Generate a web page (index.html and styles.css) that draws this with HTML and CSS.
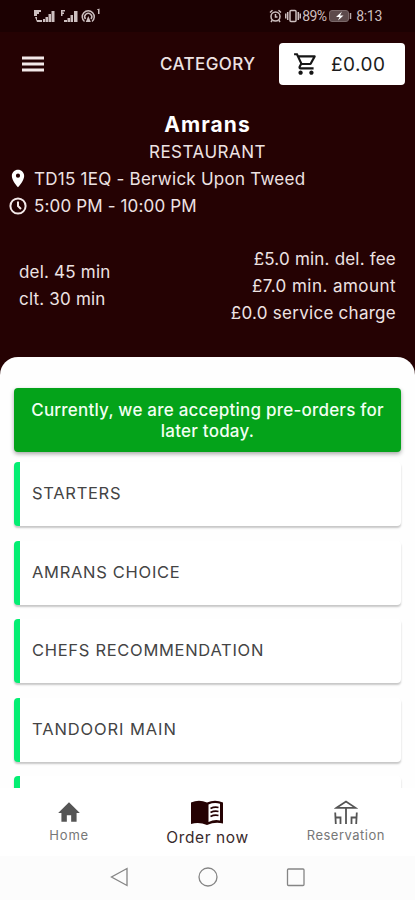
FILE: index.html
```html
<!DOCTYPE html>
<html lang="en">
<head>
    <meta charset="UTF-8">
    <meta name="viewport" content="width=device-width, initial-scale=1.0">
    <title>Amrans</title>
    <link rel="stylesheet" href="styles.css">
</head>
<body>
    <div class="app">
        <div class="status-bar">
            <div class="status-left">
                <svg width="70" height="16" viewBox="0 0 70 16" fill="#cdbfbf">
                    <path d="M0 2h7v2H5v2H3v2H0zM1 9h2v3h5v2H3zM9 11h2v3H9zM11.500 9h2.500v5h-2.500zM14.500 6H17v8h-2.500zM17.500 3h3v11h-3z"/>
                    <path d="M27 2h4v1.500h-2.500v1H30V6h-1.500v2H27zM30 12h3v2h-3zM33.500 10H36v4h-2.500zM36.500 7H39v7h-2.500zM40 3h3.500v11H40z"/>
                    <path d="M50.500 13.500a6 6 0 1 1 7.500 0M51.500 11a3.500 3.500 0 1 1 5.500 0" fill="none" stroke="#cdbfbf" stroke-width="1.500"/>
                    <path d="M54.300 8l2.500 6h-5z"/>
                    <path d="M63 1.500l2.500-1V6H64V2h-1z"/>
                </svg>
            </div>
            <div class="status-right">
                <svg width="13" height="14" viewBox="0 0 13 14" fill="none" stroke="#cdbfbf" stroke-width="1.500">
                    <circle cx="6.500" cy="7.500" r="4.500"/>
                    <path d="M1 3.500L3.500 1.300M12 3.500L9.500 1.300M6.500 5v3h2M3.200 11.300L2 13M9.800 11.300L11 13"/>
                </svg>
                <svg class="vibrate" width="16" height="14" viewBox="0 0 16 14" fill="none" stroke="#cdbfbf" stroke-width="1.500">
                    <rect x="5" y="1.500" width="6" height="11" rx="1"/>
                    <path d="M2.700 3v8M13.300 3v8M.7 4.500v5M15.300 4.500v5"/>
                </svg>
                <span class="percent">89%</span>
                <svg class="battery" width="23" height="12" viewBox="0 0 23 12">
                    <rect x=".5" y=".5" width="19" height="11" rx="2.500" fill="#5d4a4b" stroke="#7a6869"/>
                    <path d="M13 1.500L7 7h3.500L9 10.500 14.500 5.500H11z" fill="#fff"/>
                    <path d="M21.500 3v6" stroke="#b5a7a7" stroke-width="1.500"/>
                </svg>
                <span class="time">8:13</span>
            </div>
        </div>

        <div class="toolbar">
            <svg class="menu-icon" width="22" height="16" viewBox="0 0 22 16" fill="#f3e9e9">
                <path d="M0 .5h22v3H0zM0 6.500h22v3H0zM0 12.500h22v3H0z"/>
            </svg>
            <span class="category">CATEGORY</span>
            <button class="cart">
                <svg width="26" height="26" viewBox="0 0 24 24" fill="#161616">
                    <path d="M15.550 13c.75 0 1.410-.41 1.750-1.030l3.580-6.490c.37-.66-.11-1.480-.87-1.480H5.210l-.94-2H1v2h2l3.600 7.590-1.350 2.440C4.520 15.370 5.480 17 7 17h12v-2H7l1.100-2h7.450zM6.160 6h12.150l-2.760 5H8.530L6.160 6zM7 18c-1.100 0-1.990.9-1.990 2S5.900 22 7 22s2-.9 2-2-.9-2-2-2zm10 0c-1.100 0-1.990.9-1.990 2s.89 2 1.990 2 2-.9 2-2-.9-2-2-2z"/>
                </svg>
                <span>£0.00</span>
            </button>
        </div>

        <div class="restaurant">
            <h1>Amrans</h1>
            <div class="type">RESTAURANT</div>
            <div class="line">
                <svg width="20" height="20" viewBox="0 0 24 24" fill="#fff">
                    <path d="M12 1C8 1 4.600 4.200 4.600 8.300 4.600 14 12 22 12 22s7.400-8 7.400-13.700C19.400 4.200 16 1 12 1zm0 9.500a2.500 2.500 0 0 1 0-5 2.500 2.500 0 0 1 0 5z"/>
                </svg>
                <span class="address">TD15 1EQ - Berwick Upon Tweed</span>
            </div>
            <div class="line">
                <svg width="20" height="20" viewBox="0 0 20 20" fill="none" stroke="#f3e9e9" stroke-width="2">
                    <circle cx="10" cy="10" r="7.600"/>
                    <path d="M10 5.500V10l3 3"/>
                </svg>
                <span class="hours">5:00 PM - 10:00 PM</span>
            </div>
        </div>

        <div class="info">
            <div class="times">
                <div class="del">del. 45 min</div>
                <div class="clt">clt. 30 min</div>
            </div>
            <div class="fees">
                <div class="fee">£5.0 min. del. fee</div>
                <div class="amount">£7.0 min. amount</div>
                <div class="charge">£0.0 service charge</div>
            </div>
        </div>

        <div class="sheet">
            <div class="notice">Currently, we are accepting pre-orders for<br>later today.</div>
            <div class="item"><span>STARTERS</span></div>
            <div class="item"><span>AMRANS CHOICE</span></div>
            <div class="item"><span>CHEFS RECOMMENDATION</span></div>
            <div class="item"><span class="tandoori">TANDOORI MAIN</span></div>
            <div class="item"></div>
        </div>

        <div class="tabs">
            <div class="tab">
                <svg width="26" height="26" viewBox="0 0 24 24" fill="#555">
                    <path d="M10 20v-6h4v6h5v-8h3L12 2 2 12h3v8z"/>
                </svg>
                <span class="home">Home</span>
            </div>
            <div class="tab active">
                <svg width="34" height="26" viewBox="0 0 34 26">
                    <path d="M1 2.500Q9 -.8 17 2.500 25 -.8 33 2.500V23.500Q25 21.500 17 25 9 21.500 1 24z" fill="#250203"/>
                    <path d="M18.500 4.500Q24.500 2 30 3.800V20.500Q24.500 19 18.500 22z" fill="#fff"/>
                    <path d="M20.500 8.500q4-2 8-1M20.500 12.500q4-2 8-1M20.500 16.500q4-2 8-1" fill="none" stroke="#250203" stroke-width="1.800"/>
                </svg>
                <span class="order">Order now</span>
            </div>
            <div class="tab">
                <svg width="24" height="26" viewBox="0 0 24 26" fill="none" stroke="#555" stroke-width="1.800">
                    <path d="M2.500 7.800L12 1.500l9.500 6.300zM12 8v16M1.200 12.500L1.800 24M1.500 17.500H6.500V24M22.800 12.500L22.200 24M22.500 17.500H17.500V24"/>
                </svg>
                <span class="reservation">Reservation</span>
            </div>
        </div>

        <div class="system-nav">
            <svg width="20" height="20" viewBox="0 0 20 20"><path d="M17 1.500v17L1.500 10z"/></svg>
            <svg width="20" height="20" viewBox="0 0 20 20"><circle cx="10" cy="10" r="9"/></svg>
            <svg width="20" height="20" viewBox="0 0 20 20"><rect x="1.500" y="2" width="16.500" height="16.500" rx="1"/></svg>
        </div>
    </div>
</body>
</html>
```

FILE: styles.css
```css
* {
    box-sizing: border-box;
}

body {
    margin: 0;
    background-color: #250203;
    font-family: 'Inter', sans-serif;
    color: #eee3e3;
}

.app {
    display: flex;
    flex-direction: column;
    width: 415px;
    height: 900px;
    overflow: hidden;
}

.app svg {
    display: block;
    flex: none;
}

span {
    white-space: nowrap;
}

/* Status bar */
.status-bar {
    display: flex;
    justify-content: space-between;
    height: 32px;
    padding: 0 33px 0 34px;
    background-color: #1c0102;
    color: #cdbfbf;
    font-family: 'Roboto', sans-serif;
    font-size: 14px;
}

.status-left {
    padding-top: 8px;
}

.status-right {
    display: flex;
    align-items: center;
}

.vibrate {
    margin: 0 1px 0 3px;
}

.percent {
    letter-spacing: -0.7px;
}

.battery {
    margin: 0 4px 0 3px;
}

.time {
    letter-spacing: -0.3px;
}

/* Toolbar */
.toolbar {
    display: flex;
    align-items: center;
    height: 64px;
    padding: 0 10px 0 22px;
}

.category {
    margin-left: 116px;
    font-size: 17px;
    font-weight: 500;
    letter-spacing: 0.4px;
}

.cart {
    display: flex;
    align-items: center;
    width: 126px;
    height: 42px;
    margin-left: auto;
    padding: 0 0 0 14px;
    gap: 12px;
    border: none;
    border-radius: 4px;
    background-color: #fff;
    color: #1c1c1c;
    font-family: inherit;
    font-size: 19px;
    letter-spacing: 0.5px;
}

/* Restaurant header */
.restaurant {
    height: 136px;
    padding: 14px 8px 0;
    font-size: 17px;
}

h1 {
    margin: 0;
    color: #fff;
    font-size: 21px;
    font-weight: 700;
    letter-spacing: 1.1px;
    line-height: 29px;
    text-align: center;
}

.type {
    letter-spacing: 0.5px;
    line-height: 26px;
    text-align: center;
}

.line {
    display: flex;
    align-items: center;
    height: 27px;
    gap: 6px;
}

.address {
    letter-spacing: 0.25px;
}

.hours {
    letter-spacing: 0.15px;
}

.info {
    display: flex;
    align-items: center;
    justify-content: space-between;
    height: 107px;
    margin: 0 14px;
    padding: 1px 5px 0;
    border-radius: 10px;
    font-size: 17px;
    letter-spacing: 0.2px;
    line-height: 27px;
}

.fees {
    text-align: right;
}

.amount {
    letter-spacing: 0.45px;
}

.charge {
    letter-spacing: 0.27px;
}

/* Menu sheet */
.sheet {
    flex: none;
    display: flex;
    flex-direction: column;
    height: 431px;
    margin-top: 18px;
    padding: 31px 14px 0;
    overflow: hidden;
    border-radius: 18px 18px 0 0;
    background-color: #fefefe;
}

.notice {
    flex: none;
    height: 64px;
    margin-bottom: 10px;
    padding-top: 12px;
    border-radius: 4px;
    background-color: #04a31a;
    box-shadow: 0 2px 4px rgba(0, 0, 0, 0.35);
    color: #f2fff2;
    font-size: 17px;
    font-weight: 500;
    letter-spacing: 0.22px;
    line-height: 21px;
    text-align: center;
}

.item {
    flex: none;
    display: flex;
    align-items: center;
    height: 64px;
    margin-bottom: 14.500px;
    padding: 0 0 2px 12px;
    border-left: 6px solid #04ee73;
    border-radius: 4px;
    background-color: #fff;
    box-shadow: 0 2px 2px rgba(0, 0, 0, 0.22);
    color: #444;
    font-size: 16.500px;
    letter-spacing: 0.7px;
}

.tandoori {
    letter-spacing: 0.9px;
}

/* Bottom tabs */
.tabs {
    flex: none;
    display: grid;
    grid-template-columns: repeat(3, 1fr);
    height: 68px;
    background-color: #fff;
}

.tab {
    display: flex;
    flex-direction: column;
    align-items: center;
    padding-top: 12px;
    color: #777;
    font-size: 13px;
    letter-spacing: 0.5px;
    line-height: 19px;
}

.home {
    letter-spacing: 0.8px;
}

.active {
    color: #3a2a2c;
    font-size: 15.500px;
    letter-spacing: 0.6px;
    line-height: 23px;
}

.system-nav {
    flex: none;
    display: flex;
    justify-content: center;
    gap: 68px;
    height: 44px;
    padding-top: 11px;
    background-color: #fcfcfc;
}

.system-nav svg {
    fill: none;
    stroke: #858585;
    stroke-width: 1.300;
}
```
